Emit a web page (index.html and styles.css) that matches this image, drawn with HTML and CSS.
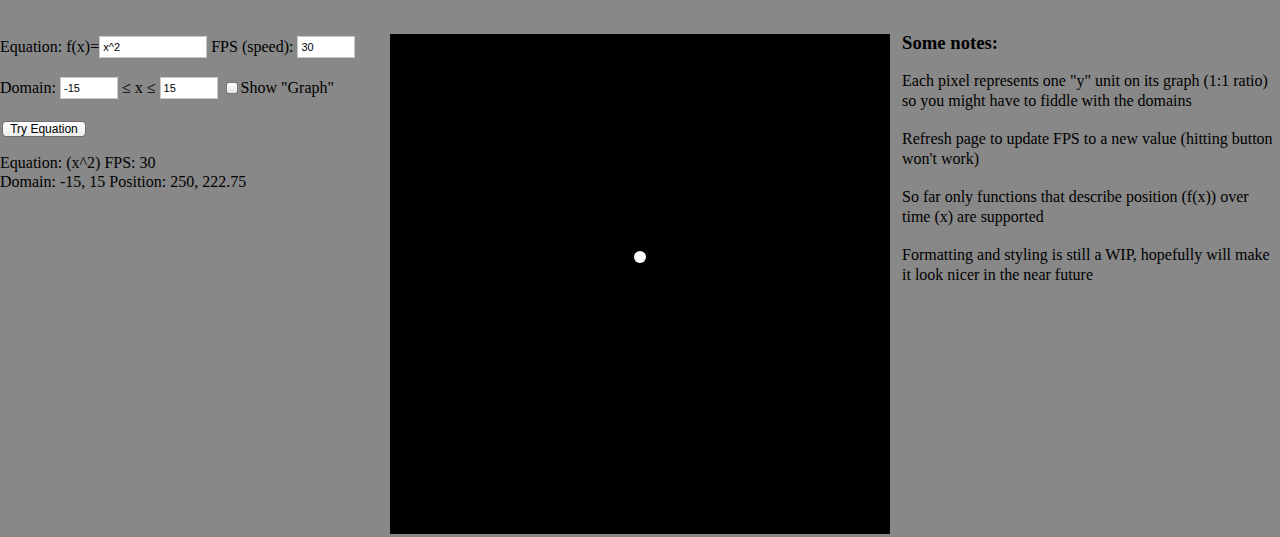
FILE: index.html
```html
<!DOCTYPE html>
<html>
<head>
<meta charset="utf-8">
<link rel="stylesheet" href="styles.css">
</head>
<body>
<div class="page">
  <div class="controls">
    <div class="row">Equation: f(x)=<input class="field wide" type="text" value="x^2"> FPS (speed): <input class="field" type="text" value="30"></div>
    <div class="row">Domain: <input class="field" type="text" value="-15"> ≤ x ≤ <input class="field" type="text" value="15"> <label class="check"><span class="box"></span>Show "Graph"</label></div>
    <div class="row"><button class="btn">Try Equation</button></div>
    <div class="output">
      <div>Equation: (x^2) FPS: 30</div>
      <div>Domain: -15, 15 Position: 250, 222.75</div>
    </div>
  </div>
  <div class="canvas"><span class="dot"></span></div>
  <div class="notes">
    <h3 class="notes-title">Some notes:</h3>
    <p class="note">Each pixel represents one "y" unit on its graph (1:1 ratio) so you might have to fiddle with the domains</p>
    <p class="note">Refresh page to update FPS to a new value (hitting button won't work)</p>
    <p class="note">So far only functions that describe position (f(x)) over time (x) are supported</p>
    <p class="note">Formatting and styling is still a WIP, hopefully will make it look nicer in the near future</p>
  </div>
</div>
</body>
</html>
```
FILE: styles.css
```css
html, body {
  margin: 0;
  padding: 0;
  background: #888888;
}
body {
  font-family: "Liberation Serif", "Times New Roman", serif;
  font-size: 16px;
  color: #000;
}
.page {
  display: flex;
  align-items: flex-start;
}
.controls {
  width: 390px;
  flex: none;
  padding-top: 36px;
  display: flex;
  flex-direction: column;
  gap: 19px;
}
.row {
  line-height: 22px;
  height: 22px;
  white-space: nowrap;
}
.field {
  font-family: "Liberation Sans", Arial, sans-serif;
  font-size: 11px;
  width: 58px;
  height: 22px;
  box-sizing: border-box;
  border: 1px solid #c8c8c8;
  background: #fff;
  padding: 1px 3px;
  margin: 0;
  vertical-align: top;
}
.field.wide {
  width: 108px;
}
.check {
  display: inline-flex;
  align-items: center;
  vertical-align: top;
  margin-left: 4px;
}
.box {
  width: 10px;
  height: 10px;
  background: linear-gradient(#ffffff, #e6e6e6);
  border: 1px solid #7a7a7a;
  border-radius: 3px;
  margin-right: 3px;
}
.btn {
  font-family: "Liberation Sans", Arial, sans-serif;
  font-size: 12px;
  line-height: 13px;
  height: 16px;
  width: 84px;
  padding: 0;
  margin: 3px 0 0 2px;
  background: linear-gradient(#ffffff, #ececec);
  border: 1px solid #6e6e6e;
  border-radius: 4px;
  color: #000;
  vertical-align: top;
}
.output {
  line-height: 19px;
  margin-top: -6px;
}
.canvas {
  position: relative;
  flex: none;
  width: 500px;
  height: 500px;
  margin-top: 34px;
  background: #000;
}
.dot {
  position: absolute;
  left: 244px;
  top: 216.75px;
  width: 12px;
  height: 12px;
  border-radius: 50%;
  background: #fff;
}
.notes {
  flex: 1;
  padding-left: 12px;
  padding-top: 33px;
}
.notes-title {
  font-size: 18.72px;
  margin: 0 0 18px;
  line-height: 20px;
}
.note {
  margin: 0 0 18px;
  line-height: 20px;
}
```
